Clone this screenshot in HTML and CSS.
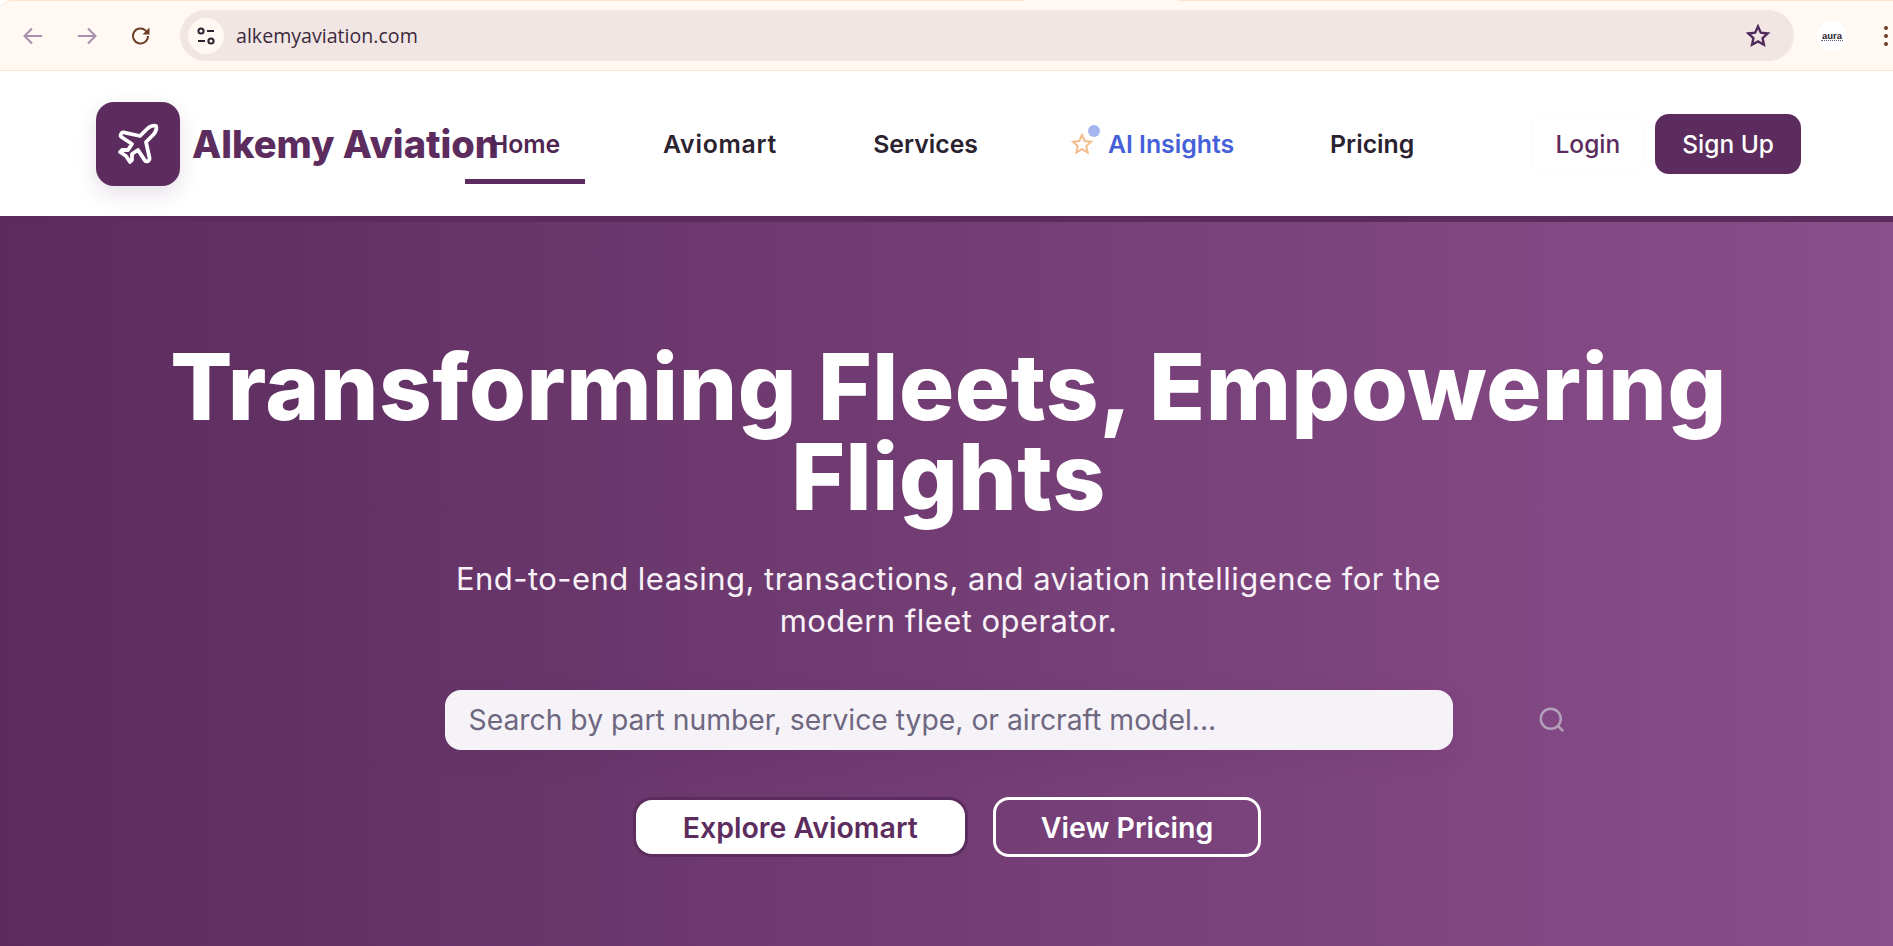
FILE: index.html
```html
<!DOCTYPE html>
<html lang="en">
<head>
    <meta charset="UTF-8">
    <meta name="viewport" content="width=device-width, initial-scale=1.0">
    <title>Alkemy Aviation</title>
    <link rel="stylesheet" href="styles.css">
</head>
<body>
    <!-- Browser toolbar -->
    <div class="browser-bar">
        <span class="tab-join"></span>
        <div class="browser-nav">
            <svg class="back-icon" width="24" height="24" viewBox="0 0 24 24"><path d="M21 12H4M11 4.5 3.5 12l7.5 7.5"/></svg>
            <svg class="back-icon" width="24" height="24" viewBox="0 0 24 24"><path d="M3 12h17M13 4.5l7.5 7.5-7.5 7.5"/></svg>
            <svg class="reload-icon" width="24" height="24" viewBox="0 0 24 24"><path d="M19 12a7.500 7.500 0 1 1-2.300-5.400L19 9"/><path class="solid" d="M20.500 3.500v7h-7z"/></svg>
        </div>
        <div class="address-pill">
            <span class="tune-badge">
                <svg width="22" height="22" viewBox="0 0 22 22"><circle cx="6" cy="6" r="2.600"/><path d="M12 6h7M3 16h7"/><circle cx="16" cy="16" r="2.600"/></svg>
            </span>
            <span class="address-text">alkemyaviation.com</span>
            <svg class="bookmark" width="26" height="26" viewBox="0 0 24 24"><path d="m12 3.200 2.600 5.800 6.300.7-4.700 4.200 1.300 6.200L12 17l-5.500 3.100 1.300-6.200-4.700-4.200 6.300-.7z"/></svg>
        </div>
        <div class="profile-badge"><span>aura</span></div>
        <div class="browser-menu"><i></i><i></i><i></i></div>
    </div>

    <!-- Site header -->
    <header class="site-header">
        <div class="brand">
            <span class="brand-mark">
                <svg width="48" height="48" viewBox="0 0 24 24"><path d="M17.800 19.200 16 11l3.500-3.500C21 6 21.500 4 21 3c-1-.5-3 0-4.500 1.500L13 8 4.800 6.200c-.5-.1-.9.1-1.100.5l-.3.500c-.2.500-.1 1 .3 1.300L9 12l-2 3H4l-1 1 3 2 2 3 1-1v-3l3-2 3.500 5.300c.3.400.8.500 1.300.3l.5-.2c.4-.3.600-.7.500-1.200z"/></svg>
            </span>
            <span class="brand-name">Alkemy Aviation</span>
        </div>
        <nav class="main-nav">
            <a class="nav-link active" href="#">Home</a>
            <a class="nav-link wide" href="#">Aviomart</a>
            <a class="nav-link" href="#">Services</a>
            <a class="nav-link insights" href="#">
                <span class="insights-icon">
                    <svg width="24" height="24" viewBox="0 0 24 24"><path d="m12 3 2.700 6 6.300.7-4.700 4.300 1.300 6.500L12 17.200 6.400 20.500 7.700 14 3 9.700 9.300 9z"/></svg>
                    <i class="insights-dot"></i>
                </span>
                AI Insights
            </a>
            <a class="nav-link" href="#">Pricing</a>
        </nav>
        <div class="auth-buttons">
            <a class="btn-login" href="#">Login</a>
            <a class="btn-signup" href="#">Sign Up</a>
        </div>
    </header>

    <!-- Hero -->
    <main class="hero">
        <h1>Transforming Fleets, Empowering Flights</h1>
        <p class="hero-sub">End-to-end leasing, transactions, and aviation intelligence for the modern fleet operator.</p>
        <div class="search-wrap">
            <input class="search-input" type="text" placeholder="Search by part number, service type, or aircraft model...">
            <svg class="search-icon" width="30" height="30" viewBox="0 0 24 24"><circle cx="11" cy="11" r="8"/><path d="m21 21-4.300-4.300"/></svg>
        </div>
        <div class="hero-actions">
            <a class="btn-explore" href="#">Explore Aviomart</a>
            <a class="btn-pricing" href="#">View Pricing</a>
        </div>
    </main>
</body>
</html>
```

FILE: styles.css
```css
/* General Reset */
* {
    margin: 0;
    padding: 0;
    box-sizing: border-box;
}

body {
    font-family: Inter, "Liberation Sans", sans-serif;
    height: 100vh;
    overflow: hidden;
    display: flex;
    flex-direction: column;
    background-color: #ffffff;
}

a {
    text-decoration: none;
}

/* Browser toolbar */
.browser-bar {
    position: relative;
    height: 71px;
    flex: none;
    display: flex;
    align-items: center;
    padding-left: 21px;
    background-color: #fff8f3;
    border-top: 1px solid #fde3cd;
    border-bottom: 1px solid #fde3cd;
    border-top-left-radius: 12px;
}

/* the active tab sits on the top edge of the bar */
.tab-join {
    position: absolute;
    top: -1px;
    left: 1025px;
    width: 153px;
    height: 1px;
    background-color: #fff8f3;
}

.browser-nav {
    display: flex;
    gap: 30px;
    width: 159px;
}

.browser-nav svg {
    fill: none;
    stroke-width: 2;
}

.back-icon {
    stroke: #a78fae;
}

.reload-icon {
    stroke: #6f3f27;
}

.reload-icon .solid {
    fill: #6f3f27;
    stroke: none;
}

.address-pill {
    width: 1614px;
    height: 51px;
    display: flex;
    align-items: center;
    padding: 0 23px 0 8px;
    border-radius: 26px;
    background-color: #f2e6e4;
}

.tune-badge {
    width: 36px;
    height: 36px;
    display: flex;
    align-items: center;
    justify-content: center;
    border-radius: 50%;
    background-color: #fff8f3;
}

.tune-badge svg {
    fill: none;
    stroke: #2c2230;
    stroke-width: 2;
}

.address-text {
    flex: 1;
    margin-left: 12px;
    font-family: "Open Sans", sans-serif;
    font-size: 19.600px;
    color: #3b2a3c;
}

.bookmark {
    fill: none;
    stroke: #4f2a5c;
    stroke-width: 2.200;
}

.profile-badge {
    width: 30px;
    height: 30px;
    margin-left: 23px;
    display: flex;
    align-items: center;
    justify-content: center;
    border-radius: 50%;
    background-color: #ffffff;
    font-family: "Liberation Sans", sans-serif;
    font-size: 9.500px;
    line-height: 9px;
    font-weight: 700;
    color: #2c2230;
}

.profile-badge span {
    padding: 0 1px;
    border-bottom: 1px dotted #6a5a80;
}

.browser-menu {
    margin-left: 37px;
    display: flex;
    flex-direction: column;
    gap: 4px;
}

.browser-menu i {
    width: 4px;
    height: 4px;
    border-radius: 50%;
    background-color: #6f3f27;
}

/* Site header */
.site-header {
    height: 145px;
    flex: none;
    display: flex;
    align-items: center;
    padding: 0 92px 0 96px;
    background-color: #ffffff;
}

.brand {
    width: 369px;
    flex: none;
    display: flex;
    align-items: center;
    gap: 12px;
}

.brand-mark {
    width: 84px;
    height: 84px;
    flex: none;
    display: flex;
    align-items: center;
    justify-content: center;
    border-radius: 18px;
    background-color: #5b2c5d;
    box-shadow: 0 8px 20px rgba(91, 44, 93, 0.15);
}

.brand-mark svg {
    fill: none;
    stroke: #ffffff;
    stroke-width: 1.900;
    stroke-linejoin: round;
}

.brand-name {
    font-size: 38px;
    font-weight: 800;
    color: #5b2c5d;
    white-space: nowrap;
}

.main-nav {
    flex: 1;
    display: flex;
    align-items: center;
}

.nav-link {
    height: 81px;
    display: flex;
    align-items: center;
    gap: 14px;
    padding: 5px 48px 0;
    border-bottom: 5px solid transparent;
    font-size: 24.800px;
    font-weight: 600;
    color: #2b2230;
    white-space: nowrap;
}

.nav-link.wide {
    letter-spacing: 0.75px;
}

.nav-link.active {
    width: 120px;
    justify-content: center;
    padding: 5px 0 0;
    margin-right: 30px;
    color: #4f2552;
    border-bottom-color: #5b2c5d;
}

.nav-link.insights {
    margin-left: -4px;
    color: #4560d8;
}

.insights-icon {
    position: relative;
    display: flex;
}

.insights-icon svg {
    fill: none;
    stroke: #f5bd8c;
    stroke-width: 2;
}

.insights-dot {
    position: absolute;
    top: -7px;
    right: -6px;
    width: 12px;
    height: 12px;
    border-radius: 50%;
    background-color: #a5b5ee;
}

.auth-buttons {
    display: flex;
    align-items: center;
    gap: 12px;
}

.btn-login,
.btn-signup {
    height: 60px;
    display: flex;
    align-items: center;
    border-radius: 14px;
    font-size: 24.500px;
    font-weight: 500;
}

.btn-login {
    padding: 0 23px 0 24px;
    color: #5b2c5d;
    background-color: #ffffff;
    box-shadow: 0 0 2px rgba(91, 44, 93, 0.07);
}

.btn-signup {
    padding: 0 27px;
    color: #ffffff;
    background-color: #5b2c5d;
}

/* Hero */
.hero {
    flex: 1;
    display: flex;
    flex-direction: column;
    align-items: center;
    padding: 120px 0 0 4px;
    color: #ffffff;
    border-top: 6px solid #5b2c5d;
    background: linear-gradient(90deg, #5b2c5d 0%, #8a4e8b 100%);
}

.hero h1 {
    width: 1600px;
    text-align: center;
    font-size: 92px;
    letter-spacing: 0.6px;
    line-height: 90px;
    font-weight: 800;
}

.hero-sub {
    width: 1010px;
    margin-top: 36px;
    text-align: center;
    font-size: 31px;
    letter-spacing: 0.45px;
    line-height: 42px;
    color: #f8f2f8;
}

.search-wrap {
    position: relative;
    width: 1008px;
    margin-top: 48px;
}

.search-input {
    display: block;
    width: 100%;
    height: 60px;
    padding: 0 24px;
    border: none;
    border-radius: 16px;
    outline: none;
    font-family: Inter, sans-serif;
    font-size: 28.300px;
    color: #6e6780;
    background-color: #f6f3f8;
    box-shadow: 0 8px 24px rgba(91, 44, 93, 0.12);
}

.search-input::placeholder {
    color: #6e6780;
    opacity: 1;
}

.search-icon {
    position: absolute;
    top: 15px;
    right: -114px;
    fill: none;
    stroke: #b3a0b8;
    stroke-width: 2;
}

.hero-actions {
    display: flex;
    align-items: center;
    gap: 28px;
    margin-top: 47px;
}

.btn-explore,
.btn-pricing {
    display: flex;
    align-items: center;
    border-radius: 16px;
    font-size: 28.500px;
    font-weight: 600;
}

.btn-explore {
    height: 54px;
    padding: 0 47px;
    color: #5b2c5d;
    background-color: #ffffff;
    box-shadow: 0 0 0 3px #5b2c5d;
}

.btn-pricing {
    height: 60px;
    padding: 0 45px;
    color: #ffffff;
    border: 3px solid #ffffff;
}
```
